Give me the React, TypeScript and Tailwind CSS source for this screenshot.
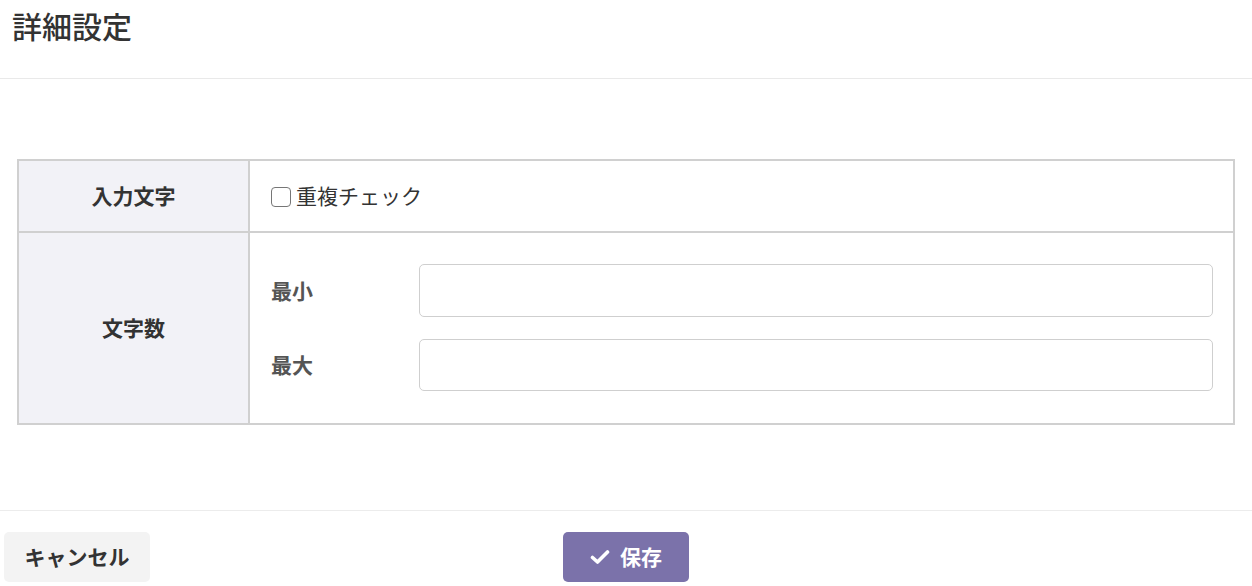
import React from "react";

export default function App() {
  const font = { fontFamily: '"Noto Sans CJK JP", "Noto Sans", sans-serif' };
  return (
    <div style={font} className="w-[1252px] h-[586px] bg-white text-[#333] overflow-hidden">
      <div className="h-[79px] border-b border-[#e9e9e9] px-[12px] pt-[4px]">
        <h1 className="text-[30px] font-medium leading-[42px] text-[#333]">詳細設定</h1>
      </div>
      <div className="h-[432px] border-b border-[#ececec] px-[17px] pt-[80px]">
        <div className="border-2 border-[#d0d0d0]">
          <div className="flex h-[72px] border-b-2 border-[#d0d0d0]">
            <div className="w-[231px] shrink-0 bg-[#f2f2f7] border-r-2 border-[#d0d0d0] flex items-center justify-center text-[21px] font-bold text-[#333]">
              入力文字
            </div>
            <div className="flex items-center pl-[21px]">
              <span className="w-[20px] h-[20px] rounded-[4px] border-[1.5px] border-[#767676] bg-white mr-[5px] mt-[2px]"></span>
              <span className="text-[21px] text-[#333]">重複チェック</span>
            </div>
          </div>
          <div className="flex h-[190px]">
            <div className="w-[231px] shrink-0 bg-[#f2f2f7] border-r-2 border-[#d0d0d0] flex items-center justify-center text-[21px] font-bold text-[#333]">
              文字数
            </div>
            <div className="flex-1 flex flex-col gap-[22px] pt-[31px] pl-[21px] pr-[20px]">
              <div className="flex items-center">
                <span className="w-[148px] text-[21px] font-bold text-[#555]">最小</span>
                <div className="flex-1 h-[53px] border border-[#cfcfcf] rounded-[5px]"></div>
              </div>
              <div className="flex items-center">
                <span className="w-[148px] text-[21px] font-bold text-[#555]">最大</span>
                <div className="flex-1 h-[52px] border border-[#cfcfcf] rounded-[5px]"></div>
              </div>
            </div>
          </div>
        </div>
      </div>
      <div className="grid grid-cols-3 items-center pt-[21px] px-[4px]">
        <div>
          <button className="w-[146px] h-[50px] rounded-[5px] bg-[#f3f3f3] text-[21px] font-bold text-[#333]">
            キャンセル
          </button>
        </div>
        <div className="flex justify-center">
          <button className="w-[126px] h-[50px] rounded-[5px] bg-[#7b72aa] text-[21px] font-bold text-white flex items-center justify-center gap-[10px]">
            <svg width="20" height="16" viewBox="0 0 20 16" fill="none">
              <path d="M2.5 8.5 L7.5 13 L17.5 3" stroke="white" strokeWidth="3.6" strokeLinecap="round" strokeLinejoin="round" />
            </svg>
            保存
          </button>
        </div>
        <div></div>
      </div>
    </div>
  );
}
